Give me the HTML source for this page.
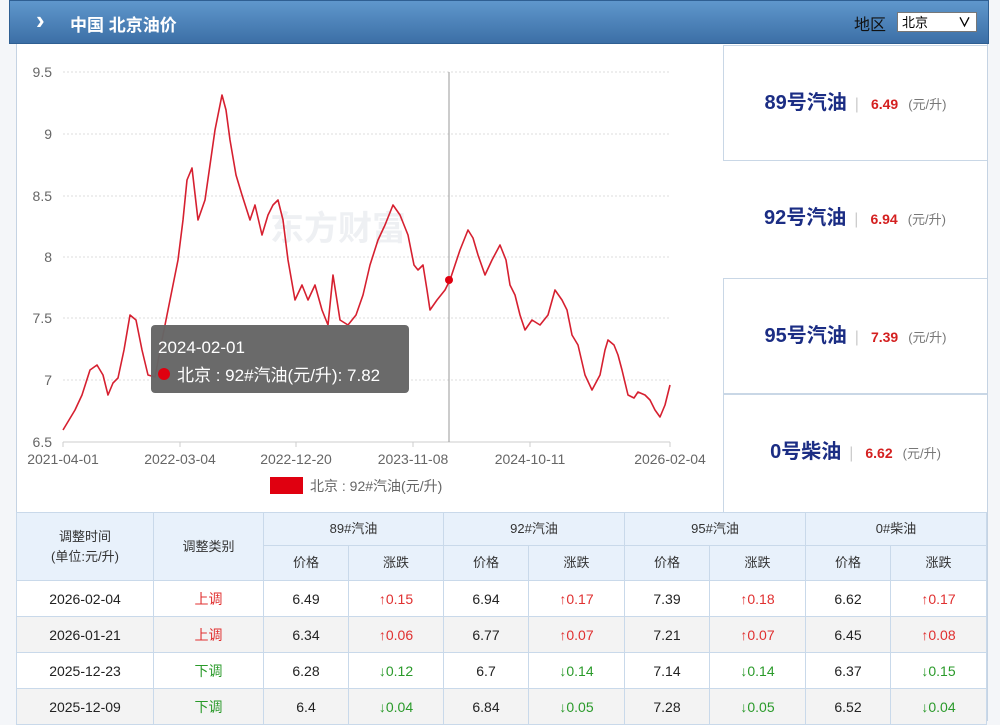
<!DOCTYPE html>
<html><head><meta charset="utf-8"><style>
body{margin:0;width:1000px;height:721px;overflow:hidden;background:#f4f6f9;font-family:"Liberation Sans","Noto Sans CJK SC",sans-serif;position:relative}
.hd{position:absolute;left:9px;top:0;width:980px;height:44px;background:linear-gradient(#5f97cc,#3c6fa6);border:1px solid #2f5f92;box-sizing:border-box}
.hd .t{position:absolute;left:60px;top:10px;color:#fff;font-size:17px;font-weight:bold}
.hd .a{position:absolute;left:26px;top:4px;color:#fff;font-size:26px;font-weight:bold}
.hd .r{position:absolute;left:844px;top:10px;color:#111;font-size:16px}
.sel{position:absolute;left:887px;top:11px;width:80px;height:20px;background:#fff;border:1px solid #777;font-size:13px;line-height:20px;padding-left:4px;box-sizing:border-box}
.main{position:absolute;left:16px;top:44px;width:970px;height:677px;background:#fff;border-left:1px solid #c5d3e3;border-right:1px solid #c5d3e3}
.box{position:absolute;left:706px;width:264px;height:116px;box-sizing:border-box;text-align:center;line-height:114px}
.bb{border-left:1px solid #c9d7e6;border-bottom:1px solid #c9d7e6;border-top:1px solid #c9d7e6}
.box b{color:#1b2d84;font-size:20px}
.box .p{color:#d42020;font-size:14px;font-weight:bold;margin-left:12px}
.box .s{color:#ccc;margin-left:8px}
.box .u{color:#777;font-size:13px;margin-left:10px}
table{position:absolute;left:16px;top:512px;border-collapse:collapse;font-size:14px;color:#222}
td{border:1px solid #c9d9ea;text-align:center;padding:0;height:35px;line-height:16px}
.h td{background:#e8f1fb;color:#333;font-size:13px;height:32px}
.g td{background:#f3f3f3}
.up{color:#e03030}.dn{color:#2a9a2a}
</style></head><body>
<div class="hd"><span class="a">&#x203A;</span><span class="t">中国 北京油价</span><span class="r">地区</span><div class="sel">北京<span style="position:absolute;right:5px;font-weight:bold">&#x2228;</span></div></div>
<div class="main">
<div class="box bb" style="top:1px"><b>89号汽油</b><span class="s">|</span><span class="p">6.49</span><span class="u">(元/升)</span></div>
<div class="box" style="top:117px"><b>92号汽油</b><span class="s">|</span><span class="p">6.94</span><span class="u">(元/升)</span></div>
<div class="box bb" style="top:234px"><b>95号汽油</b><span class="s">|</span><span class="p">7.39</span><span class="u">(元/升)</span></div>
<div class="box bb" style="top:350px;border-bottom:none;height:118px"><b>0号柴油</b><span class="s">|</span><span class="p">6.62</span><span class="u">(元/升)</span></div>
</div>
<svg style="position:absolute;left:0;top:0" width="722" height="510" font-family="Liberation Sans, Noto Sans CJK SC, sans-serif">
<g stroke="#ddd" stroke-dasharray="2,2">
<line x1="63" y1="72" x2="670" y2="72"/><line x1="63" y1="134" x2="670" y2="134"/><line x1="63" y1="196" x2="670" y2="196"/><line x1="63" y1="257" x2="670" y2="257"/><line x1="63" y1="318" x2="670" y2="318"/><line x1="63" y1="380" x2="670" y2="380"/></g>
<line x1="63" y1="442" x2="670" y2="442" stroke="#ccc"/>
<g stroke="#ccc"><line x1="63" y1="442" x2="63" y2="447"/><line x1="180" y1="442" x2="180" y2="447"/><line x1="296" y1="442" x2="296" y2="447"/><line x1="413" y1="442" x2="413" y2="447"/><line x1="530" y1="442" x2="530" y2="447"/><line x1="670" y1="442" x2="670" y2="447"/></g>
<g fill="#666" font-size="14" text-anchor="end"><text x="52" y="77">9.5</text><text x="52" y="139">9</text><text x="52" y="201">8.5</text><text x="52" y="262">8</text><text x="52" y="323">7.5</text><text x="52" y="385">7</text><text x="52" y="447">6.5</text></g>
<g fill="#666" font-size="14" text-anchor="middle"><text x="63" y="464">2021-04-01</text><text x="180" y="464">2022-03-04</text><text x="296" y="464">2022-12-20</text><text x="413" y="464">2023-11-08</text><text x="530" y="464">2024-10-11</text><text x="670" y="464">2026-02-04</text></g>
<text x="270" y="240" fill="#eef0f3" font-size="34" font-weight="bold">东方财富</text>
<line x1="449" y1="72" x2="449" y2="442" stroke="#999"/>
<polyline fill="none" stroke="#d62030" stroke-width="1.6" stroke-linejoin="round" points="63,430 75,410 82,395 90,370 97,365 103,375 108,395 113,383 118,378 124,350 130,315 136,320 142,350 148,375 155,377 162,340 170,300 178,260 183,220 187,180 192,168 198,220 205,200 210,165 215,130 222,95 226,110 230,140 236,175 242,195 250,220 255,205 262,235 268,215 273,205 278,200 283,220 288,260 295,300 302,285 308,300 315,285 322,310 328,325 333,275 340,320 348,325 356,315 363,295 370,265 378,240 385,225 393,205 400,215 408,235 414,265 418,270 423,265 427,290 430,310 437,300 445,290 450,280 455,265 460,250 468,230 473,238 478,255 485,275 492,260 500,245 506,260 510,285 515,295 520,315 525,330 532,320 540,325 548,315 555,290 562,300 567,310 572,335 578,345 585,375 592,390 600,375 605,350 608,340 614,345 618,355 622,370 628,395 634,398 638,392 645,395 650,400 655,410 660,417 665,405 670,385"/>
<circle cx="449" cy="280" r="4" fill="#e00010"/>
<rect x="151" y="325" width="258" height="68" rx="4" fill="#656565" opacity="0.97"/>
<text x="158" y="353" fill="#fff" font-size="17">2024-02-01</text>
<circle cx="164" cy="374" r="6" fill="#e00010"/>
<text x="177" y="381" fill="#fff" font-size="17">北京 : 92#汽油(元/升): 7.82</text>
<rect x="270" y="477" width="33" height="17" fill="#e00010"/>
<text x="310" y="491" fill="#666" font-size="14">北京 : 92#汽油(元/升)</text>
</svg>
<table>
<colgroup><col style="width:137px"><col style="width:110px"><col style="width:85px"><col style="width:95px"><col style="width:85px"><col style="width:96px"><col style="width:85px"><col style="width:96px"><col style="width:85px"><col style="width:96px"></colgroup>
<tr class="h"><td rowspan="2" style="line-height:20px">调整时间<br>(单位:元/升)</td><td rowspan="2">调整类别</td><td colspan="2">89#汽油</td><td colspan="2">92#汽油</td><td colspan="2">95#汽油</td><td colspan="2">0#柴油</td></tr>
<tr class="h"><td style="height:34px">价格</td><td style="height:34px">涨跌</td><td>价格</td><td>涨跌</td><td>价格</td><td>涨跌</td><td>价格</td><td>涨跌</td></tr>
<tr><td>2026-02-04</td><td class="up">上调</td><td>6.49</td><td class="up">↑0.15</td><td>6.94</td><td class="up">↑0.17</td><td>7.39</td><td class="up">↑0.18</td><td>6.62</td><td class="up">↑0.17</td></tr>
<tr class="g"><td>2026-01-21</td><td class="up">上调</td><td>6.34</td><td class="up">↑0.06</td><td>6.77</td><td class="up">↑0.07</td><td>7.21</td><td class="up">↑0.07</td><td>6.45</td><td class="up">↑0.08</td></tr>
<tr><td>2025-12-23</td><td class="dn">下调</td><td>6.28</td><td class="dn">↓0.12</td><td>6.7</td><td class="dn">↓0.14</td><td>7.14</td><td class="dn">↓0.14</td><td>6.37</td><td class="dn">↓0.15</td></tr>
<tr class="g"><td>2025-12-09</td><td class="dn">下调</td><td>6.4</td><td class="dn">↓0.04</td><td>6.84</td><td class="dn">↓0.05</td><td>7.28</td><td class="dn">↓0.05</td><td>6.52</td><td class="dn">↓0.04</td></tr>
</table>
</body></html>
